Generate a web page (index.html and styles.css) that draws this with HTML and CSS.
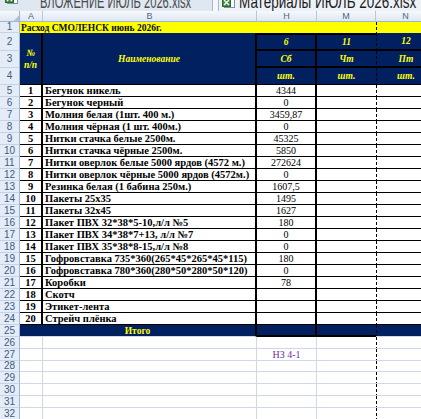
FILE: index.html
```html
<!DOCTYPE html>
<html lang="ru">
<head>
<meta charset="UTF-8">
<title>Материалы ИЮЛЬ 2026.xlsx</title>
<link rel="stylesheet" href="styles.css">
</head>
<body>
<div class="tabs">
  <div class="tab">
    <svg class="xl-icon" viewBox="0 0 13 13">
      <rect x="2.5" y="0.5" width="10" height="12" fill="#fff" stroke="#7d90a8"/>
      <rect x="0.5" y="3.5" width="8" height="8" fill="#3f8f3f" stroke="#2a6a2a"/>
      <path d="M2 5l5 5M7 5l-5 5" stroke="#fff" stroke-width="1.2"/>
    </svg>
    <span class="tab-name">ВЛОЖЕНИЕ ИЮЛЬ 2026.xlsx</span>
  </div>
  <div class="tab tab-active">
    <svg class="xl-icon" viewBox="0 0 13 13">
      <rect x="2.5" y="0.5" width="10" height="12" fill="#fff" stroke="#7d90a8"/>
      <rect x="0.5" y="3.5" width="8" height="8" fill="#3f8f3f" stroke="#2a6a2a"/>
      <path d="M2 5l5 5M7 5l-5 5" stroke="#fff" stroke-width="1.2"/>
    </svg>
    <span class="tab-name">Материалы ИЮЛЬ 2026.xlsx</span>
  </div>
</div>

<table class="sheet">
  <colgroup>
    <col class="c-rh"><col class="c-a"><col class="c-b"><col class="c-h"><col class="c-m"><col class="c-n">
  </colgroup>
  <thead>
    <tr><th class="corner"></th><th>A</th><th>B</th><th>H</th><th>M</th><th>N</th></tr>
  </thead>
  <tbody>
    <tr class="r-title">
      <th class="rh">1</th>
      <td class="title" colspan="4">Расход СМОЛЕНСК июнь 2026г.</td>
      <td class="title pb"></td>
    </tr>
    <tr class="r-h2">
      <th class="rh">2</th>
      <td class="hd hd-a" rowspan="3">№<br>п/п</td>
      <td class="hd hd-b" rowspan="3">Наименование</td>
      <td class="hd col-h hd-top">6</td>
      <td class="hd col-m hd-top">11</td>
      <td class="hd col-n pb">12</td>
    </tr>
    <tr class="r-h3">
      <th class="rh">3</th>
      <td class="hd col-h">Сб</td>
      <td class="hd col-m">Чт</td>
      <td class="hd col-n pb">Пт</td>
    </tr>
    <tr class="r-h4">
      <th class="rh">4</th>
      <td class="hd col-h hd-last">шт.</td>
      <td class="hd col-m hd-last">шт.</td>
      <td class="hd col-n hd-last pb">шт.</td>
    </tr>
    <tr class="d"><th class="rh">5</th><td class="num">1</td><td class="name">Бегунок никель</td><td class="qty">4344</td><td class="day"></td><td class="pb"></td></tr>
    <tr class="d"><th class="rh">6</th><td class="num">2</td><td class="name">Бегунок черный</td><td class="qty">0</td><td class="day"></td><td class="pb"></td></tr>
    <tr class="d"><th class="rh">7</th><td class="num">3</td><td class="name">Молния белая (1шт. 400 м.)</td><td class="qty">3459,87</td><td class="day"></td><td class="pb"></td></tr>
    <tr class="d"><th class="rh">8</th><td class="num">4</td><td class="name">Молния чёрная (1 шт. 400м.)</td><td class="qty">0</td><td class="day"></td><td class="pb"></td></tr>
    <tr class="d"><th class="rh">9</th><td class="num">5</td><td class="name">Нитки стачка белые 2500м.</td><td class="qty">45325</td><td class="day"></td><td class="pb"></td></tr>
    <tr class="d"><th class="rh">10</th><td class="num">6</td><td class="name">Нитки стачка чёрные 2500м.</td><td class="qty">5850</td><td class="day"></td><td class="pb"></td></tr>
    <tr class="d"><th class="rh">11</th><td class="num">7</td><td class="name">Нитки оверлок белые 5000 ярдов (4572 м.)</td><td class="qty">272624</td><td class="day"></td><td class="pb"></td></tr>
    <tr class="d"><th class="rh">12</th><td class="num">8</td><td class="name">Нитки оверлок чёрные 5000 ярдов (4572м.)</td><td class="qty">0</td><td class="day"></td><td class="pb"></td></tr>
    <tr class="d"><th class="rh">13</th><td class="num">9</td><td class="name">Резинка белая (1 бабина 250м.)</td><td class="qty">1607,5</td><td class="day"></td><td class="pb"></td></tr>
    <tr class="d"><th class="rh">14</th><td class="num">10</td><td class="name">Пакеты 25х35</td><td class="qty">1495</td><td class="day"></td><td class="pb"></td></tr>
    <tr class="d"><th class="rh">15</th><td class="num">11</td><td class="name">Пакеты 32х45</td><td class="qty">1627</td><td class="day"></td><td class="pb"></td></tr>
    <tr class="d"><th class="rh">16</th><td class="num">12</td><td class="name">Пакет ПВХ 32*38*5-10,л/л №5</td><td class="qty">180</td><td class="day"></td><td class="pb"></td></tr>
    <tr class="d"><th class="rh">17</th><td class="num">13</td><td class="name">Пакет ПВХ 34*38*7+13, л/л №7</td><td class="qty">0</td><td class="day"></td><td class="pb"></td></tr>
    <tr class="d"><th class="rh">18</th><td class="num">14</td><td class="name">Пакет ПВХ 35*38*8-15,л/л №8</td><td class="qty">0</td><td class="day"></td><td class="pb"></td></tr>
    <tr class="d"><th class="rh">19</th><td class="num">15</td><td class="name">Гофровставка 735*360(265*45*265*45*115)</td><td class="qty">180</td><td class="day"></td><td class="pb"></td></tr>
    <tr class="d"><th class="rh">20</th><td class="num">16</td><td class="name">Гофровставка 780*360(280*50*280*50*120)</td><td class="qty">0</td><td class="day"></td><td class="pb"></td></tr>
    <tr class="d"><th class="rh">21</th><td class="num">17</td><td class="name">Коробки</td><td class="qty">78</td><td class="day"></td><td class="pb"></td></tr>
    <tr class="d"><th class="rh">22</th><td class="num">18</td><td class="name">Скотч</td><td class="qty"></td><td class="day"></td><td class="pb"></td></tr>
    <tr class="d"><th class="rh">23</th><td class="num">19</td><td class="name">Этикет-лента</td><td class="qty"></td><td class="day"></td><td class="pb"></td></tr>
    <tr class="d"><th class="rh">24</th><td class="num">20</td><td class="name">Стрейч плёнка</td><td class="qty"></td><td class="day"></td><td class="pb"></td></tr>
    <tr class="r-total">
      <th class="rh">25</th>
      <td class="total" colspan="2">Итого</td>
      <td class="total col-h"></td>
      <td class="total col-m"></td>
      <td class="total pb"></td>
    </tr>
    <tr class="e"><th class="rh">26</th><td></td><td></td><td></td><td class="day"></td><td class="pb"></td></tr>
    <tr class="e"><th class="rh">27</th><td></td><td></td><td class="note">НЗ 4-1</td><td class="day"></td><td class="pb"></td></tr>
    <tr class="e short"><th class="rh">28</th><td></td><td></td><td></td><td class="day"></td><td class="pb"></td></tr>
    <tr class="e"><th class="rh">29</th><td></td><td></td><td></td><td class="day"></td><td class="pb"></td></tr>
    <tr class="e"><th class="rh">30</th><td></td><td></td><td></td><td class="day"></td><td class="pb"></td></tr>
    <tr class="e"><th class="rh">31</th><td></td><td></td><td></td><td class="day"></td><td class="pb"></td></tr>
    <tr class="e"><th class="rh">32</th><td></td><td></td><td></td><td class="day"></td><td class="pb"></td></tr>
  </tbody>
</table>
</body>
</html>
```

FILE: styles.css
```css
html,
body {
	margin: 0;
	overflow: hidden;
	background: #fff;
}

body {
	width: 421px;
	height: 419px;
	font-family: 'Liberation Serif', 'Times New Roman', serif;
}

/* window tabs, cut off at the top */
.tabs {
	display: flex;
	height: 11px;
	overflow: hidden;
	background: #f4f6f9;
}

.tab {
	display: flex;
	align-items: flex-start;
	flex: none;
	width: 213px;
	box-sizing: border-box;
	overflow: hidden;
	background: #dfe7f1;
	border-right: 1px solid #a7b7cc;
}

.tab-active {
	flex: 1;
	width: auto;
	margin-left: 5px;
	background: #edf2f8;
	border-left: 1px solid #a7b7cc;
	border-right: 0;
}

.xl-icon {
	flex: none;
	width: 13px;
	height: 13px;
	margin: -9px 0 0 5px;
}

.tab-active .xl-icon {
	margin: -5px 0 0 3px;
}

.tab-name {
	margin: -3px 0 0 22px;
	font-family: 'Liberation Sans', Arial, sans-serif;
	font-size: 18px;
	line-height: 11px;
	white-space: nowrap;
	color: #4a4a4a;
	transform: scaleX(0.62);
	transform-origin: left top;
}

.tab-active .tab-name {
	margin-left: 4px;
	color: #1c1c1c;
	transform: scaleX(0.75);
}

/* sheet grid */
.sheet {
	border-collapse: separate;
	border-spacing: 0;
	table-layout: fixed;
	width: 436px;
}

.c-rh { width: 20px; }
.c-a { width: 23px; }
.c-b { width: 214px; }
.c-h { width: 60px; }
.c-m { width: 59px; }
.c-n { width: 60px; }

.sheet th,
.sheet td {
	padding: 0;
	border: 0;
	border-right: 1px solid #d0d7e5;
	border-bottom: 1px solid #d0d7e5;
	line-height: 10px;
	overflow: hidden;
	white-space: nowrap;
}

.sheet thead tr { height: 11px; }

.sheet thead th {
	font-family: 'Liberation Sans', Arial, sans-serif;
	font-size: 9px;
	font-weight: normal;
	color: #4b6688;
	background: linear-gradient(#f6f9fc, #dfe7f1);
	border-right-color: #b7c6da;
	border-bottom-color: #9eb6ce;
}

.sheet thead th.corner {
	background: linear-gradient(315deg, #b4c3d6 0 4px, transparent 4px), linear-gradient(#f6f9fc, #dfe7f1);
	border-right-color: #9eb6ce;
}

.sheet th.rh {
	font-family: 'Liberation Sans', Arial, sans-serif;
	font-size: 10px;
	font-weight: normal;
	color: #3e5c83;
	background: #e4ecf7;
	border-right-color: #9eb6ce;
	border-bottom-color: #c5d3e6;
}

/* page break line between M and N */
.pb {
	background-image: repeating-linear-gradient(to bottom, #000 0 3px, transparent 3px 5px);
	background-size: 1px 100%;
	background-repeat: no-repeat;
}

.sheet .day,
.sheet .col-m,
.sheet .pb {
	border-right: 0;
}

/* title row */
.r-title { height: 11px; }

.sheet td.title {
	padding-left: 1px;
	font-size: 9.5px;
	font-weight: bold;
	color: #0a0a20;
	background-color: #ff0;
	border-right: 0;
	border-bottom: 0;
}

/* header block */
.r-h2 { height: 18px; }
.r-h3 { height: 17px; }
.r-h4 { height: 17px; }

.sheet td.hd {
	text-align: center;
	font-size: 9.5px;
	font-weight: bold;
	font-style: italic;
	line-height: 12px;
	color: #ff0;
	background-color: #002060;
	border-bottom: 2px solid #000;
}

.sheet td.hd-a,
.sheet td.hd-b {
	border-right: 2px solid #000;
	border-bottom: 1px solid #000;
}

.sheet td.col-h {
	border-right: 2px solid #000;
}

.sheet td.hd-top {
	border-top: 2px solid #000;
}

.sheet td.hd-last {
	border-bottom: 1px solid #000;
}

/* data rows */
.d { height: 12px; }

.d td {
	border-bottom-color: #000;
}

.sheet td.num {
	text-align: center;
	font-size: 10.5px;
	font-weight: bold;
	border-right: 2px solid #000;
}

.sheet td.name {
	padding-left: 2px;
	font-size: 10.5px;
	font-weight: bold;
	border-right: 2px solid #000;
}

.sheet td.qty {
	text-align: center;
	font-size: 10px;
	border-right: 2px solid #000;
}

/* total row */
.r-total { height: 12px; }

.sheet td.total {
	text-align: center;
	font-size: 9.5px;
	font-weight: bold;
	color: #ff0;
	background-color: #002060;
	border-right: 2px solid #000;
}

.sheet td.total.col-h,
.sheet td.total.col-m {
	border-bottom: 2px solid #000;
}

.sheet td.total.col-m,
.sheet td.total.pb {
	border-right: 0;
}

/* empty rows */
.e { height: 12px; }
.e.short { height: 11px; }

.sheet td.note {
	text-align: center;
	font-size: 10px;
	color: #7030a0;
}
```
